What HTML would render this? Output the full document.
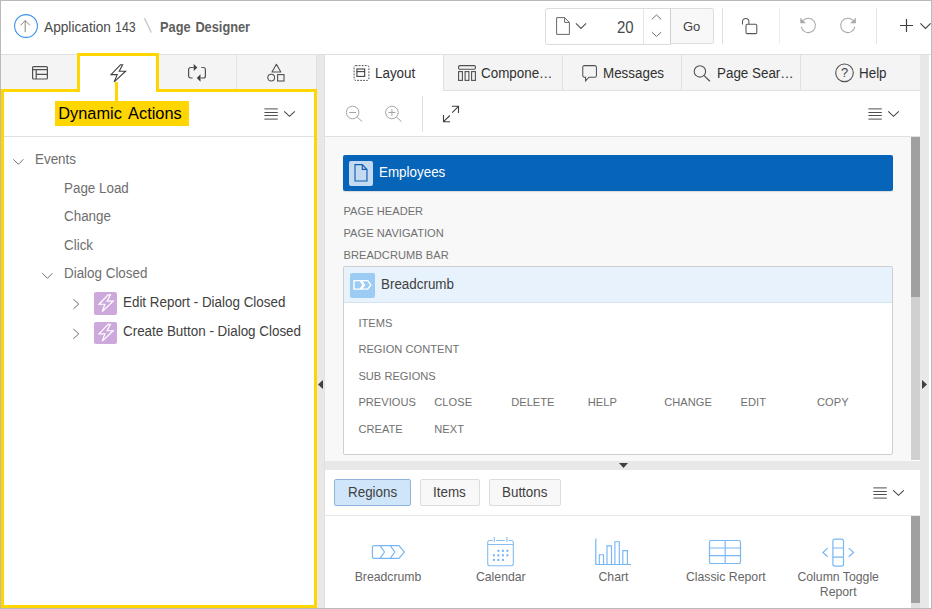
<!DOCTYPE html>
<html>
<head>
<meta charset="utf-8">
<title>Page Designer</title>
<style>
html,body{margin:0;padding:0;}
body{width:932px;height:609px;overflow:hidden;background:#fff;font-family:"Liberation Sans",sans-serif;position:relative;}
.a{position:absolute;}
.t{position:absolute;white-space:nowrap;line-height:1;}
svg{position:absolute;overflow:visible;}
.y{position:absolute;background:#ffd600;}
.x{transform:scaleX(.957);transform-origin:0 50%;}
.tr{font-size:14px;color:#6e6e6e;transform:scaleX(.957);transform-origin:0 50%;}
.sl{font-size:11.1px;color:#707070;letter-spacing:0.03px;}
.gl{font-size:12.25px;color:#666;text-align:center;}
</style>
</head>
<body>
<!-- header -->
<div class="a" style="left:0;top:0;width:932px;height:54px;background:#fff;"></div>
<div class="a" style="left:0;top:54px;width:932px;height:1px;background:#e0e0e0;"></div>


<!-- header content -->
<svg style="left:14px;top:14px" width="24" height="24" viewBox="0 0 24 24"><circle cx="12" cy="12" r="11.4" fill="#fff" stroke="#3793ec" stroke-width="1.1"/><path d="M11.2 18.2V6.6M6.5 11.3L11.2 6.6l4.7 4.7" fill="none" stroke="#8a8480" stroke-width="1"/></svg>
<div class="t" style="left:44px;top:20px;font-size:14px;color:#4a4a4a;transform:scaleX(.978);transform-origin:0 50%;">Application</div>
<div class="t" style="left:115.1px;top:20px;font-size:14px;color:#4a4a4a;transform:scaleX(.885);transform-origin:0 50%;">143</div>
<svg style="left:144px;top:18px" width="8" height="15" viewBox="0 0 8 15"><path d="M0.5 0.3L7.3 14.5" stroke="#c0c0c0" stroke-width="1.2" fill="none"/></svg>
<div class="t" style="left:159.6px;top:20px;font-size:14px;font-weight:bold;color:#5e5e5e;word-spacing:1.4px;transform:scaleX(.913);transform-origin:0 50%;">Page Designer</div>

<div class="a" style="left:545px;top:8px;width:124px;height:35px;border:1px solid #dcdcdc;border-radius:3px 0 0 3px;background:#fff;"></div>
<div class="a" style="left:643px;top:9px;width:1px;height:35px;background:#e4e4e4;"></div>
<div class="a" style="left:670px;top:8px;width:42px;height:34px;border:1px solid #dcdcdc;border-left:1px solid #d0d0d0;border-radius:0 3px 3px 0;background:#f8f8f8;"></div>
<svg style="left:556px;top:17px" width="14" height="18" viewBox="0 0 14 18"><path d="M0.6 0.6H8.6L13.4 5.4V17.4H0.6Z M8.6 0.6V5.4H13.4" fill="none" stroke="#686868" stroke-width="1"/></svg>
<svg style="left:575px;top:23px" width="11" height="6" viewBox="-0.5 0 11 6"><path d="M0.4 0.4L5.5 5.4L10.6 0.4" fill="none" stroke="#505050" stroke-width="1.1"/></svg>
<div class="t" style="left:616.6px;top:20.3px;font-size:15.6px;color:#484848;transform:scaleX(.96);transform-origin:0 50%;">20</div>
<svg style="left:651px;top:14px" width="10" height="5" viewBox="-0.5 -0.5 10 5"><path d="M0.3 4.8L5 0.5L9.7 4.8" fill="none" stroke="#707070" stroke-width="1"/></svg>
<svg style="left:651px;top:31px" width="10" height="5" viewBox="-0.5 -0.9 10 5"><path d="M0.3 0.2L5 4.5L9.7 0.2" fill="none" stroke="#707070" stroke-width="1"/></svg>
<div class="t" style="left:683px;top:19.7px;font-size:13px;color:#404040;">Go</div>

<div class="a" style="left:722px;top:8px;width:1px;height:36px;background:#e0e0e0;"></div>
<div class="a" style="left:779px;top:8px;width:1px;height:36px;background:#ececec;"></div>
<div class="a" style="left:876px;top:8px;width:1px;height:36px;background:#e4e4e4;"></div>
<!-- lock -->
<svg style="left:741px;top:17px" width="17" height="18" viewBox="0 0 17 18"><rect x="5" y="7.2" width="10.8" height="9.4" rx="1.2" fill="none" stroke="#565656" stroke-width="1.05"/><path d="M1.5 7.6V4.6A3.2 3.2 0 0 1 7.9 4.6V7.2" fill="none" stroke="#565656" stroke-width="1.05"/></svg>
<!-- undo -->
<svg style="left:800px;top:17px" width="17" height="17" viewBox="0 0 17 17"><path d="M3.2 3.3A7.2 7.2 0 1 1 1.2 9.6" fill="none" stroke="#a8a8a8" stroke-width="1.05"/><path d="M0.3 0.8V6.3H5.9Z" fill="#a8a8a8"/></svg>
<!-- redo -->
<svg style="left:839px;top:17px" width="17" height="17" viewBox="-0.1 0 17 17"><g transform="translate(17,0) scale(-1,1)"><path d="M3.2 3.3A7.2 7.2 0 1 1 1.2 9.6" fill="none" stroke="#a8a8a8" stroke-width="1.05"/><path d="M0.3 0.8V6.3H5.9Z" fill="#a8a8a8"/></g></svg>
<!-- plus -->
<svg style="left:900px;top:19px" width="13" height="13" viewBox="0 0 13 13"><path d="M6.5 0V13M0 6.5H13" stroke="#404040" stroke-width="1.2" fill="none"/></svg>
<svg style="left:920px;top:23px" width="11" height="6" viewBox="0 0 11 6"><path d="M0.4 0.4L5.5 5.4L10.6 0.4" fill="none" stroke="#404040" stroke-width="1.1"/></svg>

<!-- left tabs -->
<div class="a" style="left:1px;top:55px;width:316px;height:35px;background:#f4f4f4;"></div>
<div class="a" style="left:316px;top:55px;width:1px;height:553px;background:#e0e0e0;"></div>
<div class="a" style="left:78px;top:55px;width:1px;height:35px;background:#e4e4e4;"></div>
<div class="a" style="left:157px;top:55px;width:1px;height:35px;background:#e4e4e4;"></div>
<div class="a" style="left:236px;top:55px;width:1px;height:35px;background:#e4e4e4;"></div>
<div class="a" style="left:80px;top:56px;width:76px;height:36px;background:#fff;"></div>

<!-- left panel toolbar line -->
<div class="a" style="left:4px;top:136px;width:310px;height:1px;background:#e0e0e0;"></div>

<!-- splitter left -->
<div class="a" style="left:317px;top:55px;width:8px;height:553px;background:#e8e8e8;"></div>

<div class="a" style="left:324px;top:55px;width:1px;height:553px;background:#e0e0e0;"></div>
<!-- center tabs -->
<div class="a" style="left:444px;top:55px;width:476px;height:35px;background:#f4f4f4;"></div>
<div class="a" style="left:443px;top:90px;width:477px;height:1px;background:#e0e0e0;"></div>
<div class="a" style="left:443px;top:55px;width:1px;height:36px;background:#e0e0e0;"></div>
<div class="a" style="left:562px;top:55px;width:1px;height:35px;background:#e0e0e0;"></div>
<div class="a" style="left:681px;top:55px;width:1px;height:35px;background:#e0e0e0;"></div>
<div class="a" style="left:800px;top:55px;width:1px;height:35px;background:#e0e0e0;"></div>

<!-- center toolbar -->
<div class="a" style="left:325px;top:136px;width:595px;height:1px;background:#e0e0e0;"></div>
<div class="a" style="left:422px;top:96px;width:1px;height:36px;background:#e0e0e0;"></div>

<!-- canvas -->
<div class="a" style="left:325px;top:137px;width:586px;height:324px;background:#f8f8f8;"></div>
<div class="a" style="left:911px;top:137px;width:9px;height:323px;background:#d0d0d0;"></div>
<div class="a" style="left:911px;top:137px;width:9px;height:160px;background:#a0a0a0;"></div>

<!-- right splitter -->
<div class="a" style="left:920px;top:55px;width:9px;height:553px;background:#e8e8e8;"></div>

<!-- bottom splitter -->
<div class="a" style="left:325px;top:461px;width:595px;height:9px;background:#e8e8e8;"></div>

<!-- gallery -->
<div class="a" style="left:325px;top:515px;width:595px;height:1px;background:#e8e8e8;"></div>
<div class="a" style="left:911px;top:516px;width:9px;height:92px;background:#e0e0e0;"></div>
<div class="a" style="left:911px;top:516px;width:9px;height:87px;background:#a0a0a0;"></div>


<!-- left tab icons -->
<svg style="left:32px;top:66px" width="16" height="14" viewBox="0 0 16 14"><rect x="0.6" y="0.6" width="14.8" height="12.4" rx="1" fill="none" stroke="#505050" stroke-width="1.2"/><path d="M0.6 3.6H15.4M4.2 3.6V13M4.2 8.3H15.4" fill="none" stroke="#505050" stroke-width="1.2"/></svg>
<svg style="left:110px;top:64px" width="17" height="19" viewBox="0 0 17 19"><path d="M10.4 0.8L1 10.6H7.2L4.2 17.8L15.6 7.2H9.2L12.6 0.8Z" fill="#fff" stroke="#404040" stroke-width="1.1" stroke-linejoin="miter"/></svg>
<svg style="left:188px;top:64px" width="18" height="18" viewBox="0 0 18 18"><path d="M5.5 3.5H2.6A2 2 0 0 0 0.6 5.5V12A2 2 0 0 0 2.6 14H4.6" fill="none" stroke="#505050" stroke-width="1.2"/><path d="M12.5 14H15.4A2 2 0 0 0 17.4 12V5.5A2 2 0 0 0 15.4 3.5H13.4" fill="none" stroke="#505050" stroke-width="1.2"/><path d="M5.7 0.1L9.3 3.5L5.7 6.9Z" fill="#404040"/><path d="M12.5 10.3L8.8 14L12.5 17.7Z" fill="#404040"/></svg>
<svg style="left:267px;top:64px" width="18" height="18" viewBox="0 0 18 18"><path d="M9.4 0.3L13.8 8H5Z" fill="none" stroke="#505050" stroke-width="1.1" stroke-linejoin="round"/><circle cx="4.2" cy="13.6" r="3.4" fill="none" stroke="#505050" stroke-width="1.1"/><rect x="10.6" y="10.6" width="6.4" height="6.4" fill="none" stroke="#505050" stroke-width="1.1"/></svg>

<!-- left toolbar menu -->
<svg style="left:264px;top:107px" width="32" height="13" viewBox="0 0 32 13"><path d="M0.4 1.9H13.8M0.4 5.5H13.8M0.4 8.5H13.8M0.4 12.1H13.8" stroke="#505050" stroke-width="1" fill="none"/><path d="M20.2 4.3L25.5 9.3L30.8 4.3" fill="none" stroke="#454545" stroke-width="1.1"/></svg>

<!-- tree -->
<svg style="left:13px;top:159px" width="11" height="6" viewBox="0 0 11 6"><path d="M0.4 0.3L5.4 5.3L10.4 0.3" fill="none" stroke="#707070" stroke-width="1"/></svg>
<div class="t tr" style="left:35.3px;top:152.2px;">Events</div>
<div class="t tr" style="left:64.4px;top:180.7px;">Page Load</div>
<div class="t tr" style="left:64.4px;top:209.1px;">Change</div>
<div class="t tr" style="left:64.4px;top:237.6px;">Click</div>
<svg style="left:42px;top:273px" width="11" height="6" viewBox="0 0 11 6"><path d="M0.4 0.3L5.4 5.3L10.4 0.3" fill="none" stroke="#707070" stroke-width="1"/></svg>
<div class="t tr" style="left:64.4px;top:266px;">Dialog Closed</div>
<svg style="left:73px;top:298px" width="7" height="11" viewBox="0 -0.8 7 11"><path d="M0.4 0.5L5.8 5.3L0.4 10.1" fill="none" stroke="#6c7078" stroke-width="1"/></svg>
<div class="a" style="left:94.2px;top:291.8px;width:22.7px;height:23px;background:#cda8dd;border-radius:2px;"></div>
<svg style="left:97px;top:293px" width="16.4" height="18.7" viewBox="-0.823 -0.818 15 17" preserveAspectRatio="none"><path d="M9.4 0.8L1 9.4H6.4L4 16L14 6.6H8.4L11.4 0.8Z" fill="none" stroke="#fff" stroke-width="1.1"/></svg>
<div class="t" style="left:122.7px;top:294.5px;font-size:14px;color:#404040;transform:scaleX(.957);transform-origin:0 50%;">Edit Report - Dialog Closed</div>
<svg style="left:73px;top:328px" width="7" height="11" viewBox="0 -0.6 7 11"><path d="M0.4 0.5L5.8 5.3L0.4 10.1" fill="none" stroke="#6c7078" stroke-width="1"/></svg>
<div class="a" style="left:94.2px;top:321.9px;width:22.7px;height:22px;background:#cda8dd;border-radius:2px;"></div>
<svg style="left:97px;top:323px" width="16.4" height="18.7" viewBox="-0.823 -0.455 15 17" preserveAspectRatio="none"><path d="M9.4 0.8L1 9.4H6.4L4 16L14 6.6H8.4L11.4 0.8Z" fill="none" stroke="#fff" stroke-width="1.1"/></svg>
<div class="t" style="left:122.7px;top:323.7px;font-size:14px;color:#404040;transform:scaleX(.957);transform-origin:0 50%;">Create Button - Dialog Closed</div>


<!-- center tab content -->
<svg style="left:353px;top:65px" width="16" height="16" viewBox="-0.5 0 16 16"><rect x="0.6" y="0.6" width="14.8" height="14.8" rx="1.6" fill="none" stroke="#505050" stroke-width="1" stroke-dasharray="1.8 1.2"/><rect x="3.4" y="4" width="7.8" height="7.4" fill="none" stroke="#404040" stroke-width="1.1"/><path d="M3.4 6.6H11.2" stroke="#404040" stroke-width="1.1"/></svg>
<div class="t" style="left:375.2px;top:65.7px;font-size:14px;color:#303030;transform:scaleX(.957);transform-origin:0 50%;">Layout</div>
<svg style="left:458px;top:65px" width="18" height="16" viewBox="0 0 18 16"><rect x="0.6" y="0.6" width="16.8" height="3.6" rx="1.2" fill="none" stroke="#505050" stroke-width="1.1"/><rect x="0.6" y="6.6" width="3.8" height="8.8" fill="none" stroke="#505050" stroke-width="1.1"/><rect x="7.1" y="6.6" width="3.8" height="8.8" fill="none" stroke="#505050" stroke-width="1.1"/><rect x="13.6" y="6.6" width="3.8" height="8.8" fill="none" stroke="#505050" stroke-width="1.1"/></svg>
<div class="t" style="left:481px;top:65.7px;font-size:14px;color:#303030;transform:scaleX(.957);transform-origin:0 50%;">Compone…</div>
<svg style="left:582px;top:65px" width="15" height="17" viewBox="-0.213 0 16 17" preserveAspectRatio="none"><path d="M2.2 0.6H13.4A1.8 1.8 0 0 1 15.2 2.4V10.4A1.8 1.8 0 0 1 13.4 12.2H7.2L3.6 15.8V12.2H2.2A1.6 1.6 0 0 1 0.6 10.6V2.2A1.6 1.6 0 0 1 2.2 0.6Z" fill="none" stroke="#505050" stroke-width="1.1"/></svg>
<div class="t" style="left:603.2px;top:65.7px;font-size:14px;color:#303030;transform:scaleX(.957);transform-origin:0 50%;">Messages</div>
<svg style="left:693px;top:65px" width="17" height="17" viewBox="-0.5 0 17 17"><circle cx="6.4" cy="6.4" r="5.7" fill="none" stroke="#505050" stroke-width="1.1"/><path d="M10.6 10.6L16.4 16.2" stroke="#505050" stroke-width="1.2"/></svg>
<div class="t" style="left:716.5px;top:65.7px;font-size:14px;color:#303030;transform:scaleX(.957);transform-origin:0 50%;">Page Sear…</div>
<svg style="left:835px;top:64px" width="18" height="18" viewBox="0 0 18 18"><circle cx="9.5" cy="8.8" r="8.8" fill="none" stroke="#505050" stroke-width="1.1"/></svg>
<div class="t" style="left:840.9px;top:67.2px;font-size:12.8px;color:#404040;">?</div>
<div class="t" style="left:858.8px;top:65.7px;font-size:14px;color:#303030;transform:scaleX(.957);transform-origin:0 50%;">Help</div>

<!-- center toolbar icons -->
<svg style="left:345px;top:105px" width="17" height="17" viewBox="-0.6 -0.6 17 17"><circle cx="7" cy="6.9" r="6.3" fill="none" stroke="#a6a6a6" stroke-width="1"/><path d="M3.6 6.9H10.4M11.5 11.4L16.6 16" stroke="#a6a6a6" stroke-width="1" fill="none"/></svg>
<svg style="left:384px;top:105px" width="17" height="17" viewBox="-0.9 -0.6 17 17"><circle cx="7" cy="6.9" r="6.3" fill="none" stroke="#a6a6a6" stroke-width="1"/><path d="M3.6 6.9H10.4M7 3.5V10.3M11.5 11.4L16.6 16" stroke="#a6a6a6" stroke-width="1" fill="none"/></svg>
<svg style="left:442px;top:105px" width="17" height="17" viewBox="-0.5 -0.5 17 17"><path d="M16 0.8L9.7 7.2M9.4 0.8H16V7.4M1 16.2L7.4 10M1 9.6V16.2H7.6" fill="none" stroke="#404040" stroke-width="1.1"/></svg>
<svg style="left:868px;top:107px" width="32" height="13" viewBox="0 0 32 13"><path d="M0.4 1.9H13.8M0.4 5.5H13.8M0.4 8.5H13.8M0.4 12.1H13.8" stroke="#505050" stroke-width="1" fill="none"/><path d="M20.2 4.3L25.5 9.3L30.8 4.3" fill="none" stroke="#454545" stroke-width="1.1"/></svg>

<!-- canvas content -->
<div class="a" style="left:343px;top:155px;width:550px;height:36px;background:#0664b9;border-radius:2px;box-shadow:0 1px 1px rgba(0,0,0,0.12);"></div>
<div class="a" style="left:349px;top:161px;width:24px;height:25px;background:#c3daf1;border-radius:2px;"></div>
<svg style="left:354px;top:164px" width="13.2" height="17.6" viewBox="-0.394 0 13 17" preserveAspectRatio="none"><path d="M0.6 0.6H7.8L12.4 5.2V16.4H0.6Z M7.8 0.6V5.2H12.4" fill="none" stroke="#0b5cb4" stroke-width="1.1"/></svg>
<div class="t" style="left:379.3px;top:165.4px;font-size:14px;color:#fff;transform:scaleX(.957);transform-origin:0 50%;">Employees</div>
<div class="t sl" style="left:343.5px;top:206.3px;">PAGE HEADER</div>
<div class="t sl" style="left:343.5px;top:228.2px;">PAGE NAVIGATION</div>
<div class="t sl" style="left:343.5px;top:250px;">BREADCRUMB BAR</div>

<div class="a" style="left:343px;top:266px;width:548px;height:187px;border:1px solid #cfcfcf;background:#fff;border-radius:2px;"></div>
<div class="a" style="left:344px;top:267px;width:548px;height:35px;background:#e7f2fc;"></div>
<div class="a" style="left:344px;top:302px;width:548px;height:1px;background:#d4e3f2;"></div>
<div class="a" style="left:350px;top:273px;width:25px;height:25px;background:#9ccbf4;border-radius:2px;"></div>
<svg style="left:353px;top:279px" width="18.4" height="10" viewBox="-0.185 -0.9 17 10" preserveAspectRatio="none"><path d="M0.7 0.7H6.4L9.2 5L6.4 9.3H0.7Z" fill="none" stroke="#fff" stroke-width="1.3"/><path d="M7.6 0.7H13.4L16.3 5L13.4 9.3H7.6L10.4 5Z" fill="none" stroke="#fff" stroke-width="1.3"/></svg>
<div class="t" style="left:380.8px;top:276.8px;font-size:14px;color:#404040;transform:scaleX(.957);transform-origin:0 50%;">Breadcrumb</div>
<div class="t sl" style="left:358.4px;top:318px;">ITEMS</div>
<div class="t sl" style="left:358.4px;top:344px;">REGION CONTENT</div>
<div class="t sl" style="left:358.4px;top:370.6px;">SUB REGIONS</div>
<div class="t sl" style="left:358.4px;top:397.2px;">PREVIOUS</div>
<div class="t sl" style="left:434.3px;top:397.2px;">CLOSE</div>
<div class="t sl" style="left:511.2px;top:397.2px;">DELETE</div>
<div class="t sl" style="left:587.8px;top:397.2px;">HELP</div>
<div class="t sl" style="left:664.2px;top:397.2px;">CHANGE</div>
<div class="t sl" style="left:740.6px;top:397.2px;">EDIT</div>
<div class="t sl" style="left:817px;top:397.2px;">COPY</div>
<div class="t sl" style="left:358.4px;top:423.8px;">CREATE</div>
<div class="t sl" style="left:434.3px;top:423.8px;">NEXT</div>

<!-- gallery toolbar -->
<div class="a" style="left:334px;top:479px;width:75px;height:25px;border:1px solid #8fb5dc;border-radius:2px;background:#cfe5f9;"></div>
<div class="t" style="left:347.8px;top:484.9px;font-size:14px;color:#404040;transform:scaleX(.957);transform-origin:0 50%;">Regions</div>
<div class="a" style="left:420px;top:479px;width:58px;height:25px;border:1px solid #dcdcdc;border-radius:2px;background:#f8f8f8;"></div>
<div class="t" style="left:433px;top:484.9px;font-size:14px;color:#404040;transform:scaleX(.957);transform-origin:0 50%;">Items</div>
<div class="a" style="left:489px;top:479px;width:70px;height:25px;border:1px solid #dcdcdc;border-radius:2px;background:#f8f8f8;"></div>
<div class="t" style="left:502px;top:484.9px;font-size:14px;color:#404040;transform:scaleX(.957);transform-origin:0 50%;">Buttons</div>
<svg style="left:873px;top:486px" width="32" height="13" viewBox="0 0 32 13"><path d="M0.4 1.9H13.8M0.4 5.5H13.8M0.4 8.5H13.8M0.4 12.1H13.8" stroke="#505050" stroke-width="1" fill="none"/><path d="M20.2 4.3L25.5 9.3L30.8 4.3" fill="none" stroke="#454545" stroke-width="1.1"/></svg>

<!-- gallery icons -->
<svg style="left:371px;top:545px" width="35" height="15" viewBox="0 0 35 15"><path d="M2.8 0.7H28L33.4 7L28 13.3H2.8A1.4 1.4 0 0 1 1.4 11.9V2.1A1.4 1.4 0 0 1 2.8 0.7Z M9 0.7L13.5 7L9 13.3M19.3 0.7L23.8 7L19.3 13.3" fill="none" stroke="#78b7f4" stroke-width="1.2"/></svg>
<div class="t gl" style="left:338px;top:570.5px;width:100px;">Breadcrumb</div>

<svg style="left:487px;top:536px" width="28" height="30" viewBox="0 -0.5 28 30"><path d="M5.8 4H2.7A2 2 0 0 0 0.7 6V27.2A2 2 0 0 0 2.7 29.2H24.3A2 2 0 0 0 26.3 27.2V6A2 2 0 0 0 24.3 4H21.6M9.2 4H17.8M0.7 8H26.3M7.3 0.4V5.6M19.9 0.4V5.6" fill="none" stroke="#86bdf3" stroke-width="1.1"/><g fill="#6fb2f3"><rect x="10.4" y="13.3" width="2" height="2"/><rect x="14.9" y="13.3" width="2" height="2"/><rect x="19.4" y="13.3" width="2" height="2"/><rect x="5.9" y="17.8" width="2" height="2"/><rect x="10.4" y="17.8" width="2" height="2"/><rect x="14.9" y="17.8" width="2" height="2"/><rect x="19.4" y="17.8" width="2" height="2"/><rect x="5.9" y="22.4" width="2" height="2"/><rect x="10.4" y="22.4" width="2" height="2"/><rect x="14.9" y="22.4" width="2" height="2"/></g></svg>
<div class="t gl" style="left:450.8px;top:570.5px;width:100px;">Calendar</div>

<svg style="left:595px;top:538px" width="37" height="28" viewBox="0 0 37 28"><path d="M0.8 0.6V26.5H36" fill="none" stroke="#78b7f4" stroke-width="1.2"/><path d="M4.3 26.5V16.7H8.5V26.5M12 26.5V7.8H16.5V26.5M19.9 26.5V3.7H24.3V26.5M27.8 26.5V12.6H32.4V26.5" fill="none" stroke="#78b7f4" stroke-width="1.15"/></svg>
<div class="t gl" style="left:563.5px;top:570.5px;width:100px;">Chart</div>

<svg style="left:708px;top:539px" width="34" height="26" viewBox="0 0 34 26"><rect x="1.5" y="1.5" width="31" height="23" rx="1.6" fill="none" stroke="#78b7f4" stroke-width="1.2"/><path d="M17.2 1.5V24.5M1.5 9H32.5M1.5 16.6H32.5" fill="none" stroke="#78b7f4" stroke-width="1.15"/></svg>
<div class="t gl" style="left:675.8px;top:570.5px;width:100px;">Classic Report</div>

<svg style="left:822px;top:538px" width="33" height="29" viewBox="0 0 33 29"><rect x="10.9" y="1.2" width="10.6" height="26.9" rx="2" fill="none" stroke="#78b7f4" stroke-width="1.2"/><path d="M10.9 10H21.5M10.9 19.1H21.5M5.7 10.1L0.9 14.5L5.7 18.8M26.7 10.1L31.6 14.5L26.7 18.8" fill="none" stroke="#78b7f4" stroke-width="1.15"/></svg>
<div class="t gl" style="left:788.2px;top:570.5px;width:100px;">Column Toggle</div>
<div class="t gl" style="left:788.2px;top:585.9px;width:100px;">Report</div>

<!-- splitter arrows -->
<svg style="left:318px;top:380px" width="5" height="9" viewBox="0 0 5 9"><path d="M5 0V9L0 4.5Z" fill="#404040"/></svg>
<svg style="left:922px;top:380px" width="5" height="9" viewBox="0 0 5 9"><path d="M0 0V9L5 4.5Z" fill="#404040"/></svg>
<svg style="left:619px;top:463px" width="9" height="5" viewBox="0 0 9 5"><path d="M0 0H9L4.5 5Z" fill="#404040"/></svg>

<!-- yellow highlight -->
<div class="y" style="left:1px;top:89px;width:79px;height:3px;"></div>
<div class="y" style="left:77px;top:53px;width:3px;height:39px;"></div>
<div class="y" style="left:77px;top:53px;width:82px;height:3px;"></div>
<div class="y" style="left:156px;top:53px;width:3px;height:39px;"></div>
<div class="y" style="left:156px;top:89px;width:161px;height:3px;"></div>
<div class="y" style="left:1px;top:89px;width:3px;height:519px;"></div>
<div class="y" style="left:314px;top:89px;width:3px;height:519px;"></div>
<div class="y" style="left:1px;top:605px;width:316px;height:3px;"></div>
<div class="y" style="left:115px;top:82px;width:3px;height:20px;"></div>
<div class="y" style="left:55px;top:101px;width:134px;height:25px;"></div>
<div class="t" style="left:58.3px;top:105.3px;font-size:16.35px;word-spacing:2.6px;color:#000;">Dynamic Actions</div>

<!-- outer border -->
<div class="a" style="left:0;top:0;width:930px;height:607px;border:1px solid #bababa;pointer-events:none;"></div>
</body>
</html>
